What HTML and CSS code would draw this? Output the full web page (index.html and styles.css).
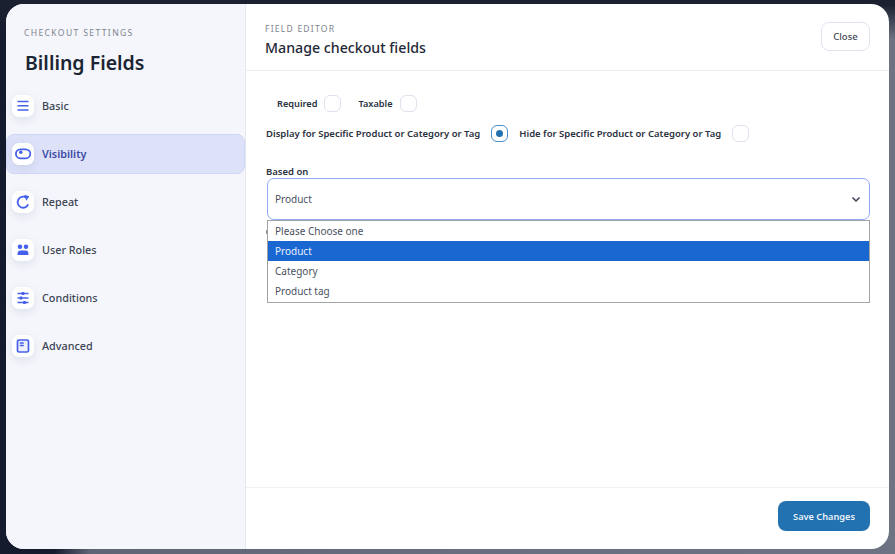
FILE: index.html
```html
<!DOCTYPE html>
<html lang="en">

<head>
  <meta charset="utf-8">
  <title>Billing Fields</title>
  <link rel="stylesheet" href="styles.css">
</head>

<body>
  <div class="modal">
    <div class="sidebar">
      <p class="eyebrow">CHECKOUT SETTINGS</p>
      <h1>Billing Fields</h1>

      <div class="nav">
        <div class="nav-item">
          <span class="nav-icon">
            <svg width="16" height="16" viewBox="0 0 16 16"><path d="M2.500 3.500h11M2.500 7.800h11M2.500 12h11" fill="none" stroke="#4560ea" stroke-width="1.600"/></svg>
          </span>
          <span class="nav-label">Basic</span>
        </div>
        <div class="nav-item active">
          <span class="nav-icon">
            <svg width="18" height="18" viewBox="0 0 18 18"><rect x="1.900" y="4.300" width="14.400" height="9" rx="4.500" fill="none" stroke="#4560ea" stroke-width="1.800"/><circle cx="6.800" cy="7.200" r="1.700" fill="#4560ea"/></svg>
          </span>
          <span class="nav-label">Visibility</span>
        </div>
        <div class="nav-item">
          <span class="nav-icon">
            <svg width="16" height="16" viewBox="0 0 16 16"><path d="M13.200 10.400A5.500 5.500 0 1 1 10.800 3.400" fill="none" stroke="#4560ea" stroke-width="1.800"/><path d="M9.200 .8L14.400 2.200 11.200 6.800Z" fill="#4560ea"/></svg>
          </span>
          <span class="nav-label">Repeat</span>
        </div>
        <div class="nav-item">
          <span class="nav-icon">
            <svg width="16" height="16" viewBox="0 0 16 16" fill="#4560ea"><circle cx="5" cy="4.800" r="2.300"/><circle cx="11" cy="4.800" r="2.300"/><path d="M2.600 13c-.4-2.600 .8-4.400 2.600-4.400h5.600c1.800 0 3 1.800 2.600 4.400Z"/></svg>
          </span>
          <span class="nav-label">User Roles</span>
        </div>
        <div class="nav-item">
          <span class="nav-icon">
            <svg width="16" height="16" viewBox="0 0 16 16" fill="none" stroke="#4560ea" stroke-width="1.500"><path d="M2.500 3.500h11M2.500 8h11M2.500 12.500h11"/><path d="M8 2v3M6 6.500v3M9.500 11v3" stroke-width="2.600"/></svg>
          </span>
          <span class="nav-label">Conditions</span>
        </div>
        <div class="nav-item">
          <span class="nav-icon">
            <svg width="16" height="16" viewBox="0 0 16 16"><rect x="2.500" y="2" width="11" height="12" rx="1.500" fill="#eef0fd" stroke="#4560ea" stroke-width="1.700"/><path d="M4.800 5h4M4.800 7.500h4" stroke="#4560ea" stroke-width="1.500"/></svg>
          </span>
          <span class="nav-label">Advanced</span>
        </div>
      </div>
    </div>

    <div class="main">
      <div class="main-header">
        <div>
          <p class="eyebrow small">FIELD EDITOR</p>
          <h2>Manage checkout fields</h2>
        </div>
        <button class="close-btn">Close</button>
      </div>

      <div class="main-body">
        <div class="check-row first">
          <span class="check-label">Required</span>
          <span class="check"></span>
          <span class="check-label">Taxable</span>
          <span class="check"></span>
        </div>
        <div class="check-row">
          <span class="check-label">Display for Specific Product or Category or Tag</span>
          <span class="check checked"></span>
          <span class="check-label">Hide for Specific Product or Category or Tag</span>
          <span class="check"></span>
        </div>

        <div class="field">
          <label class="field-label">Based on</label>
          <div class="select">
            Product
            <svg width="12" height="12" viewBox="0 0 12 12"><path d="M2.500 4.500L6 8l3.500-3.500" fill="none" stroke="#3a4150" stroke-width="1.500"/></svg>
          </div>
          <div class="dropdown">
            <div class="option">Please Choose one</div>
            <div class="option selected">Product</div>
            <div class="option">Category</div>
            <div class="option">Product tag</div>
          </div>
        </div>
      </div>

      <div class="main-footer">
        <button class="save-btn">Save Changes</button>
      </div>
    </div>
  </div>
</body>

</html>
```

FILE: styles.css
```css
* {
  box-sizing: border-box;
}

html,
body {
  height: 100%;
}

body {
  margin: 0;
  padding: 4px 6px 5px;
  font-family: 'Noto Sans', sans-serif;
  color: #1f2937;
  background:
    linear-gradient(180deg, #1b2130 0, #1b2130 5px, rgba(27, 33, 48, 0) 40px),
    linear-gradient(90deg, #141b2d 0%, #141b2d 6%, #5f6575 10%, #6a7080 60%, #6d7382 100%);
  overflow: hidden;
}

.modal {
  display: flex;
  height: 100%;
  background-color: white;
  border-radius: 18px;
  overflow: hidden;
}

.sidebar {
  width: 240px;
  flex-shrink: 0;
  background-color: #f4f6fb;
  border-right: 1px solid #e6e8ef;
  padding-top: 23px;
}

.eyebrow {
  margin: 0;
  font-size: 8.500px;
  line-height: 12px;
  letter-spacing: 1.400px;
  color: #7d838e;
  padding-left: 18px;
}

.eyebrow.small {
  padding-left: 0;
  letter-spacing: 1.250px;
}

h1 {
  margin: 9px 0 0;
  padding-left: 19px;
  font-size: 19.500px;
  line-height: 30px;
  font-weight: 600;
  color: #1b2433;
}

.nav {
  margin-top: 8px;
}

.nav-item {
  display: flex;
  align-items: center;
  gap: 8px;
  height: 40px;
  margin-bottom: 8px;
  padding-left: 6px;
  font-size: 10.800px;
  font-weight: 500;
  color: #3c4454;
  border: 1px solid transparent;
  border-left: 0;
  border-radius: 8px;
}

.nav-item.active {
  background-color: #dde2f9;
  border: 1px solid #cdd5f8;
  padding-left: 5px;
  color: #3f4ca8;
  font-weight: 600;
}

.nav-label {
  margin-bottom: 2px;
}

.nav-icon {
  display: flex;
  align-items: center;
  justify-content: center;
  width: 22px;
  height: 22px;
  background-color: white;
  border-radius: 7px;
  box-shadow: 0 3px 8px rgba(90, 100, 140, 0.14);
}

.main {
  flex: 1;
  display: flex;
  flex-direction: column;
  min-width: 0;
}

.main-header {
  display: flex;
  align-items: flex-start;
  justify-content: space-between;
  height: 67px;
  padding: 19px 19px 0 19px;
  border-bottom: 1px solid #e9ebf0;
}

h2 {
  margin: 3px 0 0;
  font-size: 14.200px;
  line-height: 20px;
  font-weight: 500;
  color: #1f2937;
}

.close-btn {
  width: 49px;
  height: 29px;
  margin-top: -1px;
  background-color: white;
  border: 1px solid #dfe3ee;
  border-radius: 8px;
  font-family: inherit;
  font-size: 9.500px;
  font-weight: 500;
  color: #444b59;
}

.main-body {
  flex: 1;
  padding: 24px 19px 0 20px;
}

.check-row {
  display: flex;
  align-items: center;
  height: 17px;
  margin-bottom: 13px;
}

.check-row.first {
  padding-left: 11px;
}

.check-label {
  font-size: 9.500px;
  font-weight: 600;
  color: #2a3140;
  margin-right: 11px;
}

.check-row.first .check-label {
  font-size: 9.200px;
  margin-right: 7px;
}

.check-row.first .check + .check-label {
  margin-left: 17px;
}

.check-row .check + .check-label {
  margin-left: 11px;
}

.check {
  display: flex;
  align-items: center;
  justify-content: center;
  width: 17px;
  height: 17px;
  flex-shrink: 0;
  border: 1px solid #dde2ee;
  border-radius: 6px;
  background-color: white;
}

.check.checked {
  border-color: #4b8fcb;
}

.check.checked::after {
  content: "";
  width: 7px;
  height: 7px;
  border-radius: 50%;
  background-color: #2271b1;
}

.field {
  position: relative;
  margin-top: 24px;
}

.field-label {
  display: block;
  font-size: 9.500px;
  line-height: 11px;
  font-weight: 600;
  color: #2a3140;
}

.select {
  display: flex;
  align-items: center;
  justify-content: space-between;
  height: 42px;
  margin: 1px 0 0 1px;
  padding: 0 7px;
  border: 1px solid #94a8f8;
  border-radius: 7px;
  font-size: 10px;
  color: #4a5160;
}

.dropdown {
  position: absolute;
  top: 54px;
  left: 1px;
  right: 0;
  padding-bottom: 1px;
  background-color: white;
  border: 1px solid #a3a3a3;
  font-size: 10px;
  color: #4a5160;
}

/* sliver of the hidden label that pokes out left of the list */
.dropdown::before {
  content: "";
  position: absolute;
  left: -2px;
  top: 9px;
  width: 1px;
  height: 4px;
  background-color: #8a8f99;
}

.option {
  height: 20px;
  line-height: 20px;
  padding-left: 7px;
}

.option.selected {
  background-color: #1a67d2;
  color: #e8f0fb;
}

.main-footer {
  display: flex;
  justify-content: flex-end;
  height: 62px;
  padding: 13px 19px 0 0;
  border-top: 1px solid #f0f1f4;
}

.save-btn {
  width: 92px;
  height: 30px;
  background-color: #2271b1;
  border: 0;
  border-radius: 8px;
  font-family: inherit;
  font-size: 9.200px;
  font-weight: 600;
  color: #e9f1f8;
}
```
